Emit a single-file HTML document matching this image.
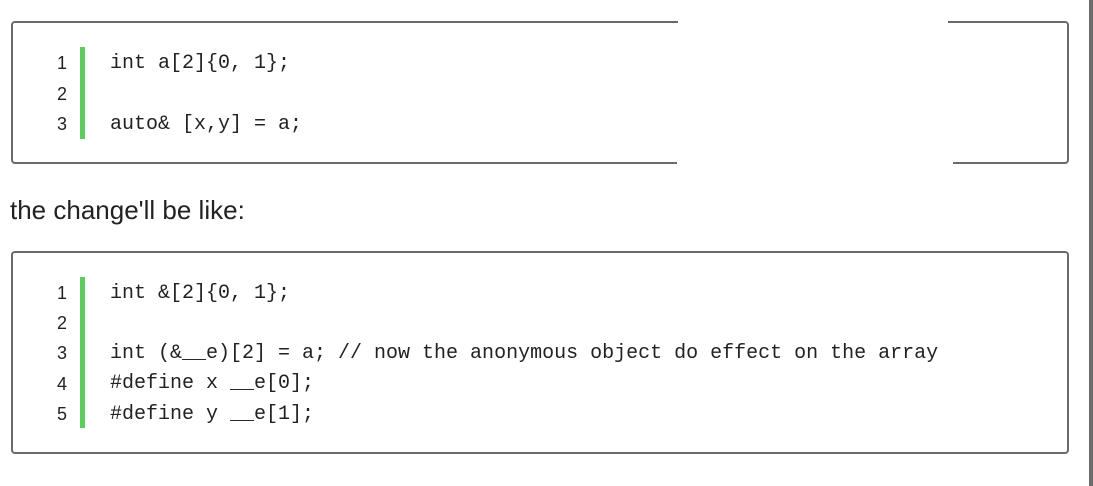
<!DOCTYPE html>
<html><head><style>
body{margin:0;width:1093px;height:486px;background:#fff;position:relative;overflow:hidden;font-family:"Liberation Sans",sans-serif}
.box{position:absolute;left:11px;width:1058px;border:2px solid #6a6a6a;border-radius:4px;box-sizing:border-box}
.bar{position:absolute;left:80px;width:5px;background:#5ecb63}
.ln{position:absolute;left:40px;width:27px;text-align:right;font-family:"Liberation Sans",sans-serif;font-size:18px;color:#222}
.code{position:absolute;left:110px;font-family:"Liberation Mono",monospace;font-size:20px;color:#222;white-space:pre}
.gap{position:absolute;background:#fff}
</style></head><body>
<div class="box" style="top:21px;height:143px"></div>
<div class="gap" style="left:678px;top:18px;width:270px;height:6px"></div>
<div class="gap" style="left:677px;top:160px;width:276px;height:6px"></div>
<div class="box" style="top:251px;height:203px"></div>
<div style="position:absolute;right:0;top:0;width:4px;height:486px;background:#6d6d6d"></div>

<div class="bar" style="top:47px;height:92px"></div>
<div class="ln" style="top:53px">1</div><div class="ln" style="top:84px">2</div><div class="ln" style="top:114px">3</div>
<div class="code" style="top:52px">int a[2]{0, 1};</div>
<div class="code" style="top:113px">auto&amp; [x,y] = a;</div>

<div style="position:absolute;left:10px;top:195px;font-size:26px;color:#222">the change'll be like:</div>

<div class="bar" style="top:277px;height:151px"></div>
<div class="ln" style="top:283px">1</div><div class="ln" style="top:313px">2</div><div class="ln" style="top:343px">3</div><div class="ln" style="top:374px">4</div><div class="ln" style="top:404px">5</div>
<div class="code" style="top:282px">int &amp;[2]{0, 1};</div>
<div class="code" style="top:342px">int (&amp;__e)[2] = a; // now the anonymous object do effect on the array</div>
<div class="code" style="top:372px">#define x __e[0];</div>
<div class="code" style="top:403px">#define y __e[1];</div>
</body></html>
